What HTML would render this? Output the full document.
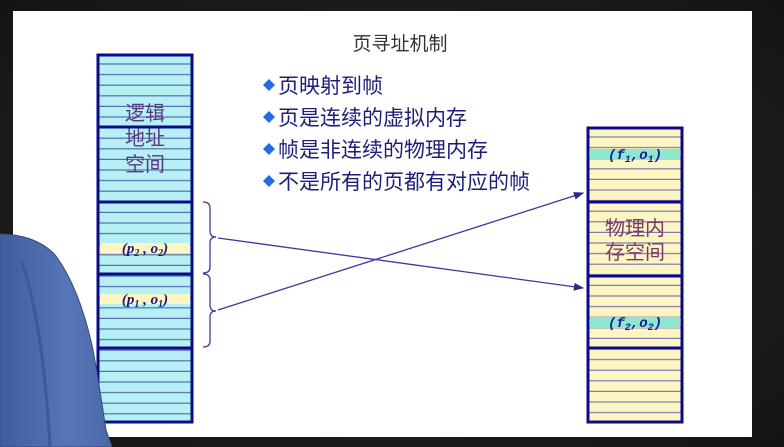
<!DOCTYPE html>
<html><head><meta charset="utf-8"><style>
html,body{margin:0;padding:0;width:784px;height:447px;overflow:hidden;background:#1c1c1c;}
svg{display:block}
</style></head><body>
<svg width="784" height="447" xmlns="http://www.w3.org/2000/svg">
<defs>
<radialGradient id="bg" cx="0.5" cy="0.5" r="0.8"><stop offset="0" stop-color="#2a2a2a"/><stop offset="1" stop-color="#111"/></radialGradient>
<pattern id="sl" x="0" y="54" width="10" height="10.6" patternUnits="userSpaceOnUse"><rect width="10" height="10.6" fill="#b4f0f4"/><rect y="9.4" width="10" height="1.4" fill="#5a6aa8"/></pattern>
<pattern id="sr" x="0" y="127" width="10" height="10.6" patternUnits="userSpaceOnUse"><rect width="10" height="10.6" fill="#fdf6c4"/><rect y="9.4" width="10" height="1.4" fill="#7a7aa8"/></pattern>
<marker id="ar" markerWidth="8" markerHeight="6" refX="7" refY="3" orient="auto"><path d="M0,0 L8,3 L0,6 z" fill="#2a2a8a"/></marker>
<linearGradient id="sh" x1="0" y1="0" x2="1" y2="0"><stop offset="0" stop-color="#3f5d9e"/><stop offset="0.6" stop-color="#5676b8"/><stop offset="1" stop-color="#4a68a8"/></linearGradient>
</defs>
<rect width="784" height="447" fill="url(#bg)"/>
<rect x="13" y="11" width="739" height="426" fill="#fff"/>
<text x="400" y="50" text-anchor="middle" font-family="Liberation Sans, Noto Sans CJK SC, sans-serif" font-size="19" fill="#333">页寻址机制</text>
<g font-family="Liberation Sans, Noto Sans CJK SC, sans-serif" font-size="21" fill="#1e1e7a">
<text x="278" y="93">页映射到帧</text>
<text x="278" y="125">页是连续的虚拟内存</text>
<text x="278" y="157">帧是非连续的物理内存</text>
<text x="278" y="189">不是所有的页都有对应的帧</text>
</g>
<g fill="#1e6fe0">
<path d="M269,79 l6,6 l-6,6 l-6,-6z"/><path d="M269,111 l6,6 l-6,6 l-6,-6z"/><path d="M269,143 l6,6 l-6,6 l-6,-6z"/><path d="M269,175 l6,6 l-6,6 l-6,-6z"/>
</g>
<!-- left column -->
<rect x="98" y="55" width="94" height="367" fill="url(#sl)"/>
<rect x="100" y="243" width="90" height="10" fill="#fdf6c4"/>
<rect x="100" y="294" width="90" height="10" fill="#fdf6c4"/>
<g stroke="#0a0a8a" stroke-width="3" fill="none">
<rect x="98" y="55" width="94" height="367"/>
<line x1="98" y1="127" x2="192" y2="127"/><line x1="98" y1="202" x2="192" y2="202"/><line x1="98" y1="274" x2="192" y2="274"/><line x1="98" y1="348" x2="192" y2="348"/>
</g>
<g font-family="Liberation Sans, Noto Sans CJK SC, sans-serif" font-size="20" fill="#5a3a80" text-anchor="middle">
<text x="145" y="120">逻辑</text><text x="145" y="145">地址</text><text x="145" y="171">空间</text>
</g>
<g font-family="Liberation Serif, serif" font-style="italic" font-weight="bold" font-size="15" fill="#1a1a7a" text-anchor="middle">
<text x="145" y="253">(p<tspan font-size="10" dy="3">2</tspan><tspan dy="-3"> , o</tspan><tspan font-size="10" dy="3">2</tspan><tspan dy="-3">)</tspan></text>
<text x="145" y="304">(p<tspan font-size="10" dy="3">1</tspan><tspan dy="-3"> , o</tspan><tspan font-size="10" dy="3">1</tspan><tspan dy="-3">)</tspan></text>
</g>
<!-- right column -->
<rect x="588" y="128" width="94" height="294" fill="url(#sr)"/>
<rect x="590" y="149" width="90" height="11" fill="#8ee8d0"/>
<rect x="590" y="317" width="90" height="11" fill="#8ee8d0"/>
<g stroke="#0a0a8a" stroke-width="3" fill="none">
<rect x="588" y="128" width="94" height="294"/>
<line x1="588" y1="202" x2="682" y2="202"/><line x1="588" y1="276" x2="682" y2="276"/><line x1="588" y1="348" x2="682" y2="348"/>
</g>
<g font-family="Liberation Sans, Noto Sans CJK SC, sans-serif" font-size="20" fill="#7a3a6a" text-anchor="middle">
<text x="635" y="235">物理内</text><text x="635" y="259">存空间</text>
</g>
<g font-family="Liberation Mono, monospace" font-style="italic" font-weight="bold" font-size="14" fill="#1a1a9a" text-anchor="middle">
<text x="635" y="159">(f<tspan font-size="10" dy="3">1</tspan><tspan dy="-3">,o</tspan><tspan font-size="10" dy="3">1</tspan><tspan dy="-3">)</tspan></text>
<text x="635" y="327">(f<tspan font-size="10" dy="3">2</tspan><tspan dy="-3">,o</tspan><tspan font-size="10" dy="3">2</tspan><tspan dy="-3">)</tspan></text>
</g>
<!-- braces & arrows -->
<g stroke="#3a3a9a" stroke-width="1.3" fill="none">
<path d="M203,202 q7,0 7,6 v23 q0,6 6,6 q-6,0 -6,6 v24 q0,6 -7,6"/>
<path d="M203,274 q7,0 7,6 v25 q0,6 6,6 q-6,0 -6,6 v24 q0,6 -7,6"/>
<line x1="218" y1="238" x2="583" y2="288" marker-end="url(#ar)"/>
<line x1="218" y1="310" x2="583" y2="193" marker-end="url(#ar)"/>
</g>
<!-- person -->
<path d="M0,234 C20,234 42,240 56,256 C72,278 84,310 92,345 C98,375 102,405 106,430 L112,447 L0,447 Z" fill="url(#sh)" stroke="#3a4a70" stroke-width="1"/>
<path d="M22,262 C35,300 45,360 50,447" stroke="#3c5a98" stroke-width="3" fill="none"/>
</svg>
</body></html>
